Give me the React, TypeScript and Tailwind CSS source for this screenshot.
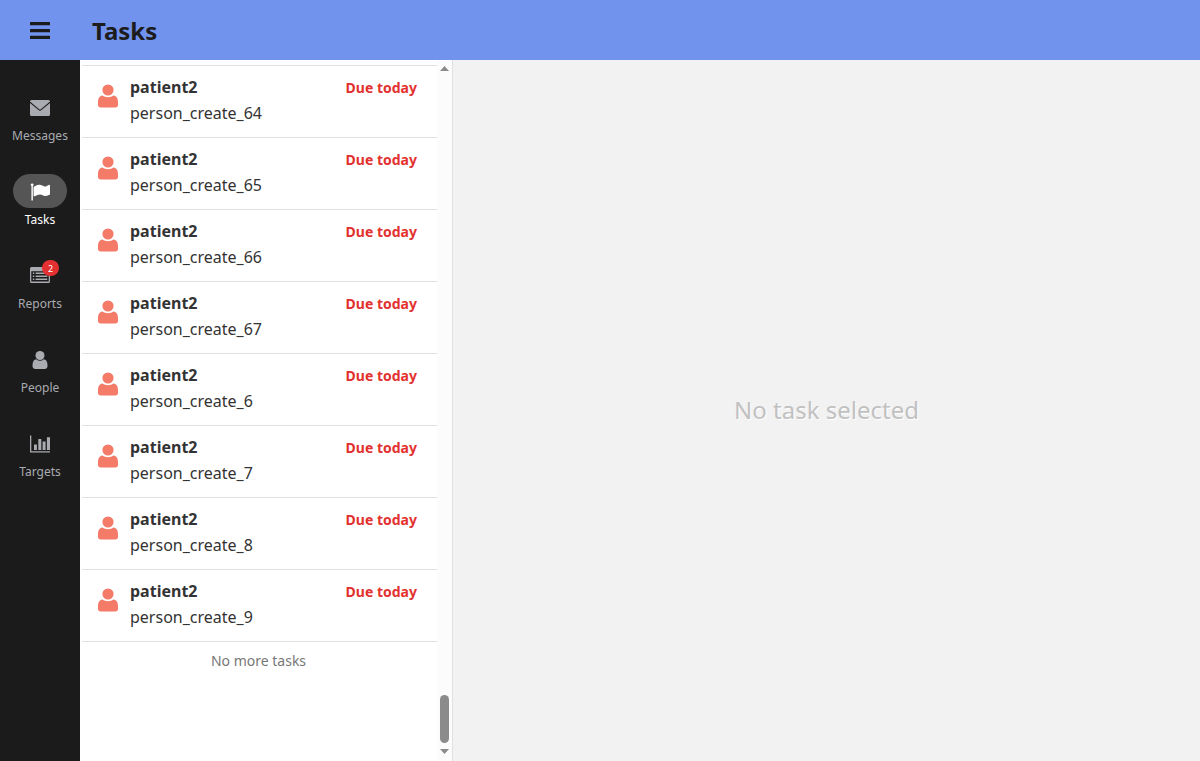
import type { ReactNode } from 'react';

const USER_BODY =
  'M1536 1399q0 109-62.5 187t-150.5 78h-854q-88 0-150.5-78t-62.5-187q0-85 8.5-160.5t31.5-152 58.5-131 94-89 134.5-34.5q131 128 313 128t313-128q76 0 134.5 34.5t94 89 58.5 131 31.5 152 8.5 160.5z';

function EnvelopeIcon() {
  return (
    <svg viewBox="0 0 20 16" className="h-4 w-5" fill="currentColor" aria-hidden="true">
      <path d="M1.5 0h17A1.5 1.5 0 0 1 20 1.500L10.800 9.200a1.300 1.300 0 0 1-1.600 0L0 1.500A1.500 1.500 0 0 1 1.500 0z" />
      <path d="M0 2.900l8.500 7.200a2.400 2.400 0 0 0 3 0L20 2.900v11.600a1.500 1.500 0 0 1-1.500 1.500h-17A1.500 1.500 0 0 1 0 14.500z" />
    </svg>
  );
}

function FlagIcon() {
  return (
    <svg viewBox="0 0 1792 1792" className="h-5 w-5" fill="currentColor" aria-hidden="true">
      <path d="M320 256q0 72-64 110v1266q0 13-9.500 22.500t-22.500 9.500h-64q-13 0-22.500-9.500t-9.500-22.500v-1266q-64-38-64-110 0-53 37.500-90.500t90.500-37.500 90.500 37.500 37.500 90.500zm1472 64v763q0 25-12.500 38.500t-39.500 27.500q-215 116-369 116-61 0-123.500-22t-108.500-48-115.500-48-142.500-22q-192 0-464 146-17 9-33 9-26 0-45-19t-19-45v-742q0-32 31-55 21-14 79-43 236-120 421-120 107 0 200 29t219 88q38 19 88 19 54 0 117.500-21t110-47 88-47 54.500-21q26 0 45 19t19 45z" />
    </svg>
  );
}

function ReportIcon() {
  return (
    <svg viewBox="0 0 20 18" className="h-[18px] w-5" fill="currentColor" aria-hidden="true">
      <path
        fillRule="evenodd"
        d="M1.500 0h17A1.500 1.500 0 0 1 20 1.500v13a1.500 1.500 0 0 1-1.500 1.500h-17A1.500 1.500 0 0 1 0 14.500v-13A1.500 1.500 0 0 1 1.500 0zM1.300 4.300v10.300h17.400V4.300z"
      />
      <path d="M2.800 5.500h1.500v1.400H2.800zM5.600 5.500h11.700v1.400H5.600zM2.800 8.500h1.500v1.400H2.800zM5.600 8.500h11.700v1.400H5.600zM2.800 11.500h1.500v1.400H2.800zM5.600 11.500h11.700v1.400H5.600z" />
    </svg>
  );
}

function PersonIcon() {
  return (
    <svg viewBox="256 128 1280 1536" className="h-[18px] w-4" fill="currentColor" aria-hidden="true">
      <path d={USER_BODY} />
      <circle cx="896" cy="512" r="384" />
    </svg>
  );
}

function ChartIcon() {
  return (
    <svg viewBox="0 0 20 18" className="h-[18px] w-5" fill="currentColor" aria-hidden="true">
      <path d="M0 .5h1.300v15.700H20v1.300H0zM4 9.500h2.900v5.500H4zM8.300 4h3v11h-3zM12.600 6.600h3V15h-3zM16.900 2.300H20V15h-3.100z" />
    </svg>
  );
}

function PatientIcon() {
  return (
    <svg viewBox="0 0 20 24" className="h-6 w-5 shrink-0" fill="#f47b67" aria-hidden="true">
      <circle cx="10" cy="6" r="5.600" />
      <path d="M4.600 11.600C1.400 12 0 14.600 0 18.200v2.600C0 22.600 1 23.600 2.800 23.600h14.400c1.800 0 2.800-1 2.800-2.800v-2.600c0-3.600-1.400-6.200-4.600-6.600-1.500 1.100-3.300 1.700-5.400 1.700s-3.900-.6-5.400-1.700z" />
    </svg>
  );
}

type NavEntry = { label: string; icon: ReactNode; active?: boolean; badge?: number };

const NAV: NavEntry[] = [
  { label: 'Messages', icon: <EnvelopeIcon /> },
  { label: 'Tasks', icon: <FlagIcon />, active: true },
  { label: 'Reports', icon: <ReportIcon />, badge: 2 },
  { label: 'People', icon: <PersonIcon /> },
  { label: 'Targets', icon: <ChartIcon /> },
];

const TASKS = [64, 65, 66, 67, 6, 7, 8, 9];

function NavItem({ label, icon, active, badge }: NavEntry) {
  return (
    <a
      href={`#${label.toLowerCase()}`}
      aria-current={active ? 'page' : undefined}
      className={`flex flex-col items-center gap-1 ${active ? 'text-white' : 'text-[#a9abb0]'}`}
    >
      <span
        className={`relative flex h-[34px] w-[54px] items-center justify-center rounded-full pt-0.5 ${active ? 'bg-[#555555]' : ''}`}
      >
        {icon}
        {badge !== undefined && (
          <span className="absolute top-0.5 right-2 flex h-4 w-[17px] items-center justify-center rounded-full bg-[#e33030] text-[9px] leading-none text-white">
            {badge}
          </span>
        )}
      </span>
      <span className="text-xs leading-4">{label}</span>
    </a>
  );
}

export default function App() {
  return (
    <div className="flex h-screen flex-col bg-white font-['Noto_Sans',sans-serif] text-[#333333]">
      <header className="flex h-[60px] shrink-0 items-center bg-[#7193ee] text-[#1c1c1c]">
        <div className="flex w-20 justify-center">
          <button type="button" aria-label="Menu" className="flex">
            <svg viewBox="0 0 20 18" className="h-[18px] w-5" fill="currentColor" aria-hidden="true">
              <rect y="1" width="20" height="3.200" rx="0.500" />
              <rect y="8" width="20" height="3.200" rx="0.500" />
              <rect y="14.800" width="20" height="3.200" rx="0.500" />
            </svg>
          </button>
        </div>
        <h1 className="px-3 pt-0.5 text-2xl leading-8 font-bold">Tasks</h1>
      </header>

      <div className="flex min-h-0 flex-1">
        <nav aria-label="Main" className="flex w-20 shrink-0 flex-col gap-[30px] bg-[#1b1b1b] pt-[30px]">
          {NAV.map((entry) => (
            <NavItem key={entry.label} {...entry} />
          ))}
        </nav>

        <section aria-label="Task list" className="flex w-[373px] shrink-0 border-r border-[#e0e0e0]">
          <div className="min-w-0 flex-1 overflow-hidden pt-[5px]">
            <ul className="ml-0.5 border-b border-[#e0e0e0]">
              {TASKS.map((id) => (
                <li key={id}>
                  <a href={`#person_create_${id}`} className="flex h-[72px] gap-3 border-t border-[#e0e0e0] pt-2 pr-5 pl-4">
                    <span className="pt-2.5">
                      <PatientIcon />
                    </span>
                    <span className="min-w-0 flex-1">
                      <span className="flex h-[26px] items-baseline justify-between leading-[26px]">
                        <span className="font-bold">patient2</span>
                        <span className="text-sm leading-[26px] font-bold text-[#e33030]">Due today</span>
                      </span>
                      <span className="block leading-[26px]">person_create_{id}</span>
                    </span>
                  </a>
                </li>
              ))}
            </ul>
            <p className="pt-[9px] text-center text-sm leading-5 text-[#777777]">No more tasks</p>
          </div>
          <div aria-hidden="true" className="flex w-[15px] flex-col items-center justify-between bg-[#fcfcfc] pt-1.5 pb-[7px]">
            <svg viewBox="0 0 9 5" className="h-[5px] w-[9px]" fill="#8b8b8b">
              <path d="M0 5L4.500 0L9 5z" />
            </svg>
            <span className="flex flex-col items-center gap-1.5">
              <span className="h-12 w-[9px] rounded-full bg-[#8b8b8b]" />
              <svg viewBox="0 0 9 5" className="h-[5px] w-[9px]" fill="#8b8b8b">
                <path d="M0 0L4.500 5L9 0z" />
              </svg>
            </span>
          </div>
        </section>

        <main className="flex min-w-0 flex-1 items-center justify-center bg-[#f2f2f2] pb-0.5">
          <p className="text-2xl text-[#c1c1c1] [text-shadow:1px_1px_0_#ffffff]">No task selected</p>
        </main>
      </div>
    </div>
  );
}
